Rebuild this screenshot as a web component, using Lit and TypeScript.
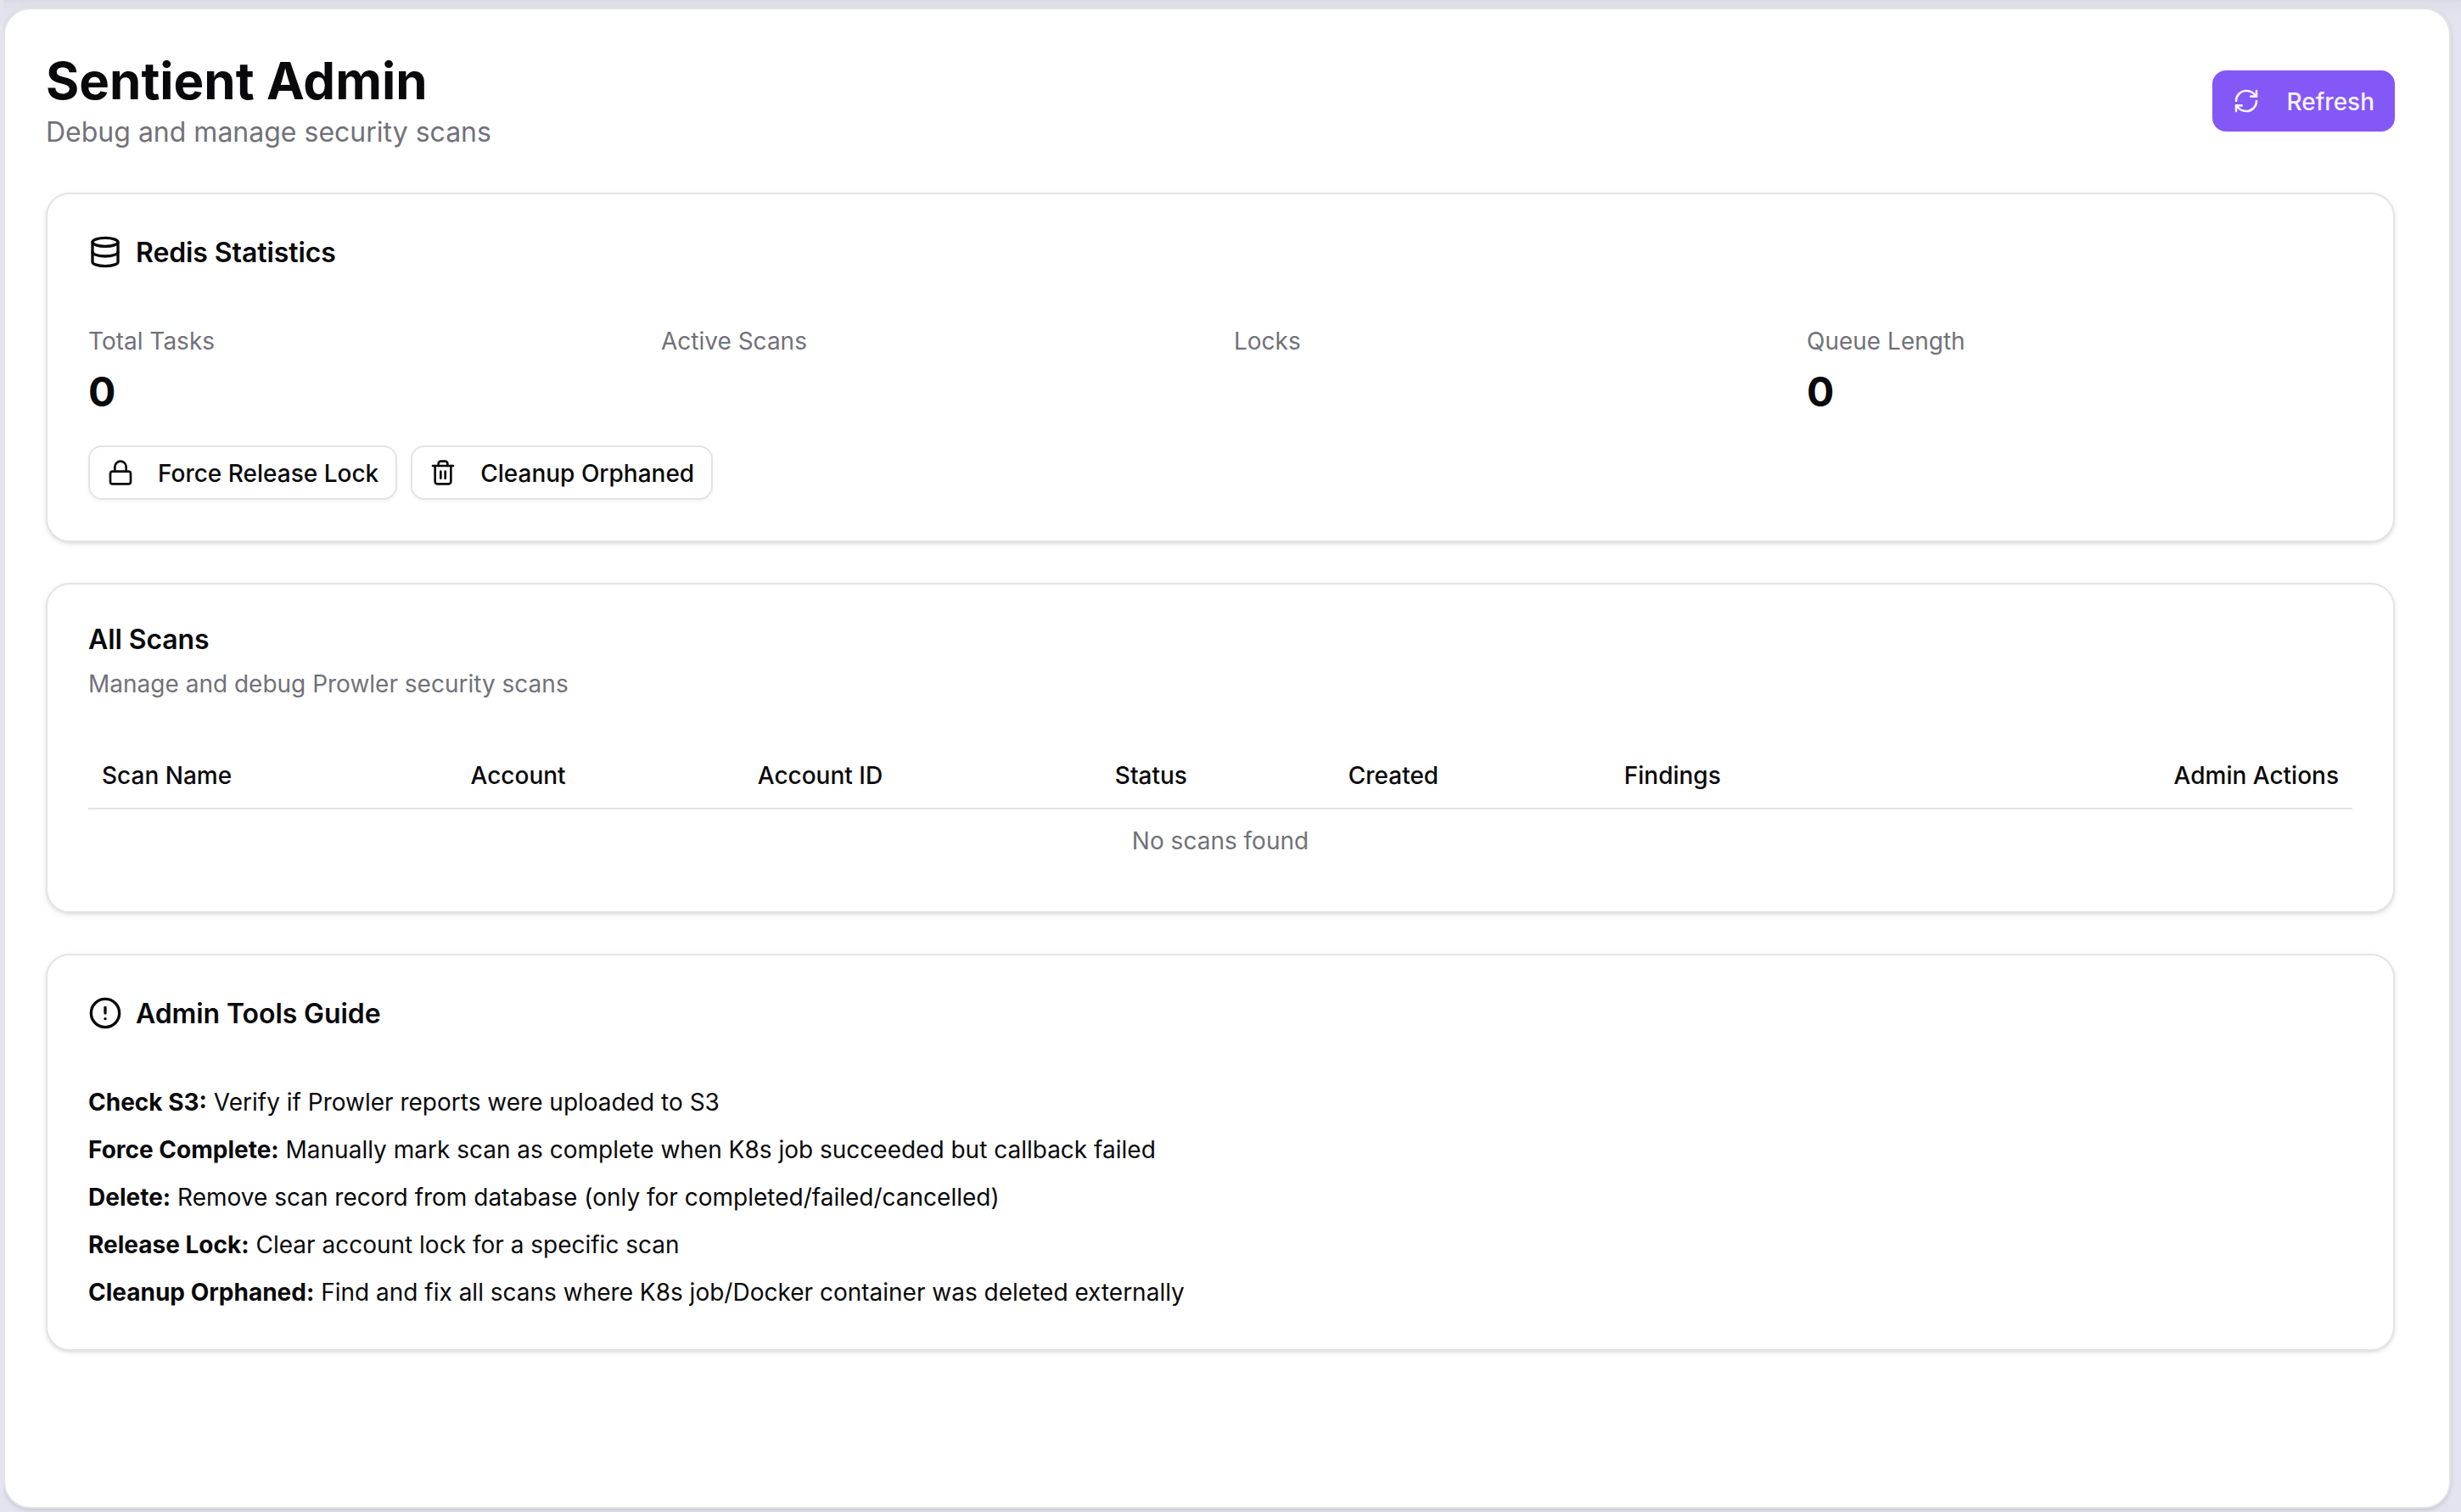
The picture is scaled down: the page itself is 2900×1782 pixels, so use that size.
import { LitElement, html, css, svg } from "lit";
import { customElement, property } from "lit/decorators.js";

const ICONS: Record<string, unknown> = {
  database: svg`<ellipse cx="12" cy="5" rx="9" ry="3"/><path d="M3 5V19A9 3 0 0 0 21 19V5"/><path d="M3 12A9 3 0 0 0 21 12"/>`,
  sync: svg`<path d="M3 12a9 9 0 0 1 9-9 9.75 9.75 0 0 1 6.74 2.74L21 8"/><path d="M21 3v5h-5"/><path d="M21 12a9 9 0 0 1-9 9 9.75 9.75 0 0 1-6.74-2.74L3 16"/><path d="M8 16H3v5"/>`,
  lock: svg`<rect width="18" height="11" x="3" y="11" rx="2" ry="2"/><path d="M7 11V7a5 5 0 0 1 10 0v4"/>`,
  trash: svg`<path d="M3 6h18"/><path d="M19 6v14c0 1-1 2-2 2H7c-1 0-2-1-2-2V6"/><path d="M8 6V4c0-1 1-2 2-2h4c1 0 2 1 2 2v2"/><line x1="10" x2="10" y1="11" y2="17"/><line x1="14" x2="14" y1="11" y2="17"/>`,
  alert: svg`<circle cx="12" cy="12" r="10"/><line x1="12" x2="12" y1="8" y2="12"/><line x1="12" x2="12.01" y1="16" y2="16"/>`,
};

@customElement("ui-icon")
export class UiIcon extends LitElement {
  @property() name = "";
  @property({ type: Number }) size = 32;

  static styles = css`
    :host {
      display: block;
      flex: none;
    }
    svg {
      display: block;
    }
  `;

  render() {
    return html`<svg
      width=${this.size}
      height=${this.size}
      viewBox="0 0 24 24"
      fill="none"
      stroke="currentColor"
      stroke-width="2"
      stroke-linecap="round"
      stroke-linejoin="round"
    >
      ${ICONS[this.name]}
    </svg>`;
  }
}

const STATS = [
  { label: "Total Tasks", value: "0" },
  { label: "Active Scans", value: "" },
  { label: "Locks", value: "" },
  { label: "Queue Length", value: "0" },
];

const COLUMNS = ["Scan Name", "Account", "Account ID", "Status", "Created", "Findings", "Admin Actions"];

const GUIDE = [
  ["Check S3:", "Verify if Prowler reports were uploaded to S3"],
  ["Force Complete:", "Manually mark scan as complete when K8s job succeeded but callback failed"],
  ["Delete:", "Remove scan record from database (only for completed/failed/cancelled)"],
  ["Release Lock:", "Clear account lock for a specific scan"],
  ["Cleanup Orphaned:", "Find and fix all scans where K8s job/Docker container was deleted externally"],
];

@customElement("app-root")
export class AppRoot extends LitElement {
  static styles = css`
    :host {
      display: block;
      height: 1782px;
      overflow: hidden;
      background: #e4e4f0;
      color: #09090b;
      font-family: Inter, "Liberation Sans", sans-serif;
      font-size: 28px;
      line-height: 40px;
    }
    * {
      box-sizing: border-box;
      margin: 0;
    }
    .frame {
      height: 100%;
      margin-left: 4px;
      padding: 9px 12px 4px 0;
      overflow: hidden;
      background: linear-gradient(#dadae5, #dfdfea 4px, #e1e1ec 9px, #e4e4f0 24px);
    }
    .panel {
      height: 100%;
      padding: 48px 64px 48px 48px;
      border: 2px solid #e4e4e7;
      border-radius: 32px;
      background: #fff;
      box-shadow: 0 2px 6px rgba(0, 0, 0, 0.1), 0 2px 4px -2px rgba(0, 0, 0, 0.1);
      display: flex;
      flex-direction: column;
      gap: 48px;
    }
    .top {
      display: flex;
      align-items: center;
      justify-content: space-between;
    }
    h1 {
      font-size: 60px;
      line-height: 72px;
      font-weight: 700;
    }
    /* Optical centring: text sits one pixel below its line box centre. */
    p,
    .label {
      padding-top: 1px;
      margin-bottom: -1px;
    }
    .subtitle {
      font-size: 32px;
      line-height: 48px;
    }
    .muted {
      color: #71717a;
    }
    button {
      display: flex;
      align-items: center;
      font: inherit;
      font-weight: 500;
      white-space: nowrap;
    }
    .primary {
      height: 72px;
      padding: 0 24px;
      gap: 32px;
      border: 0;
      border-radius: 16px;
      background: #8457f7;
      color: #f5f3ff;
    }
    .outline {
      height: 64px;
      padding: 0 20px;
      gap: 28px;
      border: 2px solid #e4e4e7;
      border-radius: 16px;
      background: #fff;
      color: inherit;
      box-shadow: 0 2px 4px rgba(0, 0, 0, 0.05);
    }
    .card {
      padding: 48px;
      border: 2px solid #e4e4e7;
      border-radius: 28px;
      background: #fff;
      box-shadow: 0 2px 6px rgba(0, 0, 0, 0.1), 0 2px 4px -2px rgba(0, 0, 0, 0.1);
      display: flex;
      flex-direction: column;
      gap: 48px;
    }
    .head {
      display: grid;
      grid-template-rows: auto auto;
      gap: 16px;
    }
    h2 {
      display: flex;
      align-items: center;
      gap: 16px;
      font-size: 32px;
      line-height: 32px;
      font-weight: 600;
      letter-spacing: -0.09px;
    }
    .body {
      display: flex;
      flex-direction: column;
      gap: 32px;
    }
    .stats {
      display: grid;
      grid-template-columns: repeat(4, 1fr);
      gap: 32px;
    }
    .stat {
      display: flex;
      flex-direction: column;
      gap: 8px;
    }
    .value {
      font-size: 48px;
      line-height: 64px;
      font-weight: 700;
    }
    .actions {
      display: flex;
      gap: 16px;
    }
    table {
      width: 100%;
      border-collapse: collapse;
    }
    thead tr {
      border-bottom: 2px solid #e4e4e7;
    }
    th {
      height: 80px;
      padding: 2px 16px 0;
      text-align: left;
      font-weight: 500;
      white-space: nowrap;
    }
    th:last-child {
      text-align: right;
    }
    td {
      padding: 17px 16px 15px;
      text-align: center;
    }
    .guide {
      display: flex;
      flex-direction: column;
      gap: 16px;
    }
    strong {
      font-weight: 700;
    }
  `;

  render() {
    return html`
      <div class="frame">
        <main class="panel">
          <header class="top">
            <div>
              <h1>Sentient Admin</h1>
              <p class="subtitle muted">Debug and manage security scans</p>
            </div>
            <button class="primary"><ui-icon name="sync"></ui-icon><span class="label">Refresh</span></button>
          </header>

          <section class="card">
            <div class="head">
              <h2><ui-icon name="database" size="40"></ui-icon><span class="label">Redis Statistics</span></h2>
              <div></div>
            </div>
            <div class="body">
              <div class="stats">
                ${STATS.map(
                  (s) => html`<div class="stat">
                    <p class="muted">${s.label}</p>
                    <p class="value">${s.value}</p>
                  </div>`
                )}
              </div>
              <div class="actions">
                <button class="outline"><ui-icon name="lock"></ui-icon><span class="label">Force Release Lock</span></button>
                <button class="outline"><ui-icon name="trash"></ui-icon><span class="label">Cleanup Orphaned</span></button>
              </div>
            </div>
          </section>

          <section class="card">
            <div class="head">
              <h2><span class="label">All Scans</span></h2>
              <p class="muted">Manage and debug Prowler security scans</p>
            </div>
            <table>
              <thead>
                <tr>
                  ${COLUMNS.map((c) => html`<th>${c}</th>`)}
                </tr>
              </thead>
              <tbody>
                <tr>
                  <td class="muted" colspan="7">No scans found</td>
                </tr>
              </tbody>
            </table>
          </section>

          <section class="card">
            <div class="head">
              <h2><ui-icon name="alert" size="40"></ui-icon><span class="label">Admin Tools Guide</span></h2>
              <div></div>
            </div>
            <div class="guide">
              ${GUIDE.map(([term, text]) => html`<p><strong>${term}</strong> ${text}</p>`)}
            </div>
          </section>
        </main>
      </div>
    `;
  }
}
